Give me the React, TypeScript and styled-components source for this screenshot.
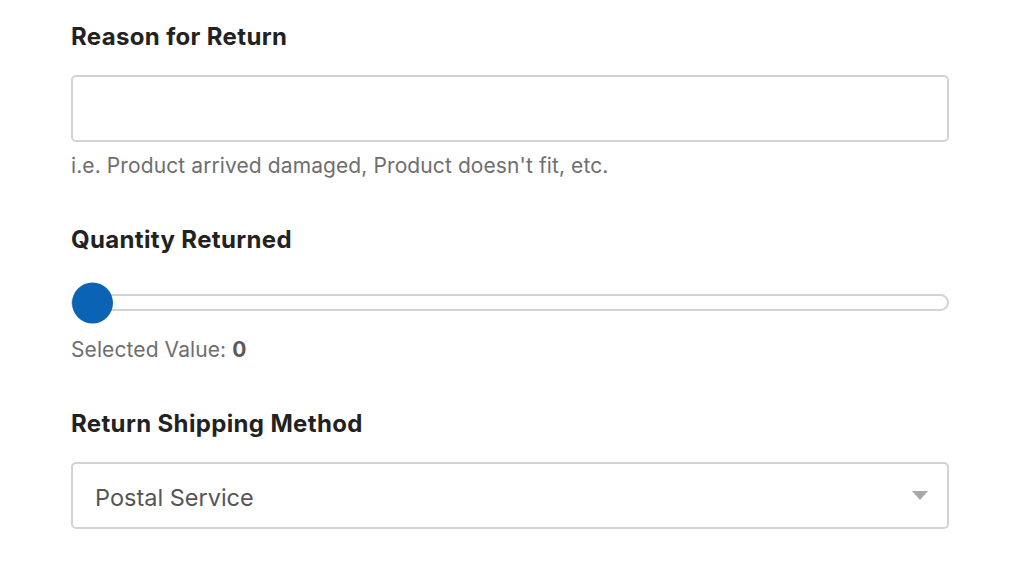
import styled, { createGlobalStyle } from "styled-components";

const GlobalStyle = createGlobalStyle`
  body {
    margin: 0;
    background: #ffffff;
    font-family: Inter, "Noto Sans", sans-serif;
    color: #222222;
  }
`;

const StyledForm = styled.form`
  width: 878px;
  padding: 22px 0 0 71px;
  display: flex;
  flex-direction: column;
`;

const Field = styled.div`
  display: flex;
  flex-direction: column;
  margin-bottom: 46px;
`;

const Label = styled.label`
  font-size: 24px;
  font-weight: 700;
  line-height: 30px;
  letter-spacing: 0.35px;
  color: #222222;
  margin-bottom: 23px;
`;

const TextInput = styled.input`
  box-sizing: border-box;
  height: 67px;
  width: 100%;
  border: 2px solid #d3d3d3;
  border-radius: 5px;
  padding: 0 22px;
  font: inherit;
  font-size: 23px;
  outline: none;
`;

const Hint = styled.p`
  margin: 11px 0 0;
  font-size: 21px;
  line-height: 26px;
  letter-spacing: 0.1px;
  color: #6e6e6e;

  strong {
    color: #5a5a5a;
    font-weight: 700;
  }
`;

const Track = styled.div`
  position: relative;
  box-sizing: border-box;
  height: 17px;
  margin: 16px 0 15px;
  border: 2px solid #d3d3d3;
  border-radius: 9px;
`;

const Thumb = styled.span`
  position: absolute;
  top: 50%;
  width: 41px;
  height: 41px;
  border-radius: 50%;
  background: #0b63b6;
  transform: translate(-1px, -50%);
`;

const SelectBox = styled.div`
  box-sizing: border-box;
  height: 67px;
  display: flex;
  align-items: center;
  justify-content: space-between;
  border: 2px solid #d3d3d3;
  border-radius: 5px;
  padding: 4px 19px 0 22px;
  font-size: 23.5px;
  color: #555555;
`;

const Caret = styled.span`
  width: 0;
  height: 0;
  border-left: 8px solid transparent;
  border-right: 8px solid transparent;
  border-top: 9px solid #a8a8a8;
  margin-bottom: 4px;
`;

function App() {
  const quantity = 0;
  const max = 10;

  return (
    <>
      <GlobalStyle />
      <StyledForm>
        <Field>
          <Label htmlFor="reason">Reason for Return</Label>
          <TextInput type="text" id="reason" />
          <Hint>i.e. Product arrived damaged, Product doesn't fit, etc.</Hint>
        </Field>
        <Field>
          <Label>Quantity Returned</Label>
          <Track>
            <Thumb style={{ left: `${(quantity / max) * 100}%` }} />
          </Track>
          <Hint>
            Selected Value: <strong>{quantity}</strong>
          </Hint>
        </Field>
        <Field>
          <Label>Return Shipping Method</Label>
          <SelectBox>
            <span>Postal Service</span>
            <Caret />
          </SelectBox>
        </Field>
      </StyledForm>
    </>
  );
}

export default App;
